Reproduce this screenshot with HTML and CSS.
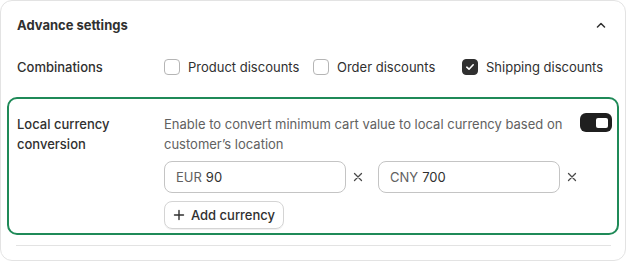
FILE: index.html
```html
<!DOCTYPE html>
<html lang="en">
<head>
    <meta charset="UTF-8">
    <meta name="viewport" content="width=device-width, initial-scale=1.0">
    <title>Advance settings</title>
    <link rel="stylesheet" href="styles.css">
</head>
<body>
    <div class="card">
        <!-- Header -->
        <div class="card-header">
            <h2 class="card-title">Advance settings</h2>
            <button class="collapse-btn" aria-label="Collapse">
                <svg width="10" height="6" viewBox="0 0 10 6"><path d="M1.5 5 L5 1.5 L8.5 5" fill="none" stroke="#303030" stroke-width="1.5" stroke-linecap="round" stroke-linejoin="round"/></svg>
            </button>
        </div>

        <!-- Combinations -->
        <div class="setting-row combinations">
            <div class="setting-label">Combinations</div>
            <div class="checkbox-grid">
                <label class="checkbox"><span class="box"></span>Product discounts</label>
                <label class="checkbox"><span class="box"></span>Order discounts</label>
                <label class="checkbox"><span class="box checked">
                    <svg width="10" height="8" viewBox="0 0 10 8"><path d="M1.8 4.2 L4 6.2 L8.2 1.8" fill="none" stroke="#fff" stroke-width="1.6" stroke-linecap="round" stroke-linejoin="round"/></svg>
                </span>Shipping discounts</label>
            </div>
        </div>

        <!-- Local currency -->
        <div class="highlight">
            <div class="setting-label multiline">Local currency<br>conversion</div>
            <div class="setting-body">
                <div class="desc-row">
                    <p class="desc">Enable to convert minimum cart value to local currency based on customer’s location</p>
                    <span class="toggle"><span class="knob"></span></span>
                </div>
                <div class="currency-row">
                    <div class="currency">
                        <div class="input"><span class="prefix">EUR</span> 90</div>
                        <button class="remove" aria-label="Remove">
                            <svg width="10" height="10" viewBox="0 0 10 10"><path d="M1.5 1.5 L8.5 8.5 M8.5 1.5 L1.5 8.5" fill="none" stroke="#4a4a4a" stroke-width="1.3" stroke-linecap="round"/></svg>
                        </button>
                    </div>
                    <div class="currency">
                        <div class="input"><span class="prefix">CNY</span> 700</div>
                        <button class="remove" aria-label="Remove">
                            <svg width="10" height="10" viewBox="0 0 10 10"><path d="M1.5 1.5 L8.5 8.5 M8.5 1.5 L1.5 8.5" fill="none" stroke="#4a4a4a" stroke-width="1.3" stroke-linecap="round"/></svg>
                        </button>
                    </div>
                </div>
                <button class="btn-add">
                    <svg width="12" height="12" viewBox="0 0 12 12"><path d="M6 1.5 V10.5 M1.5 6 H10.5" fill="none" stroke="#303030" stroke-width="1.4" stroke-linecap="round"/></svg>
                    Add currency
                </button>
            </div>
        </div>

        <div class="divider"></div>
    </div>
</body>
</html>
```

FILE: styles.css
```css
* {
    margin: 0;
    padding: 0;
    box-sizing: border-box;
}

body {
    font-family: Inter, 'Noto Sans', sans-serif;
    font-size: 13px;
    line-height: 20px;
    color: #303030;
    background: #fff;
}

button {
    font-family: inherit;
    background: none;
    border: none;
    color: inherit;
}

.card {
    width: 626px;
    border: 1px solid #e3e3e3;
    border-radius: 12px;
    padding: 0 14px 14px 16px;
    background: #fff;
}

/* Header */
.card-header {
    height: 47px;
    display: flex;
    align-items: center;
    justify-content: space-between;
}

.card-title {
    font-size: 13px;
    font-weight: 650;
}

.collapse-btn {
    width: 20px;
    height: 20px;
    display: flex;
    align-items: center;
    justify-content: center;
}

/* Rows */
.setting-row {
    display: flex;
    align-items: center;
}

.combinations {
    height: 38px;
}

.setting-label {
    width: 147px;
    flex-shrink: 0;
    font-weight: 550;
}

.checkbox-grid {
    flex: 1;
    display: grid;
    grid-template-columns: repeat(3, 1fr);
}

.checkbox {
    display: flex;
    align-items: center;
    gap: 8px;
    color: #303030;
}

.box {
    width: 16px;
    height: 16px;
    border: 1px solid #b5b5b5;
    border-radius: 4px;
    display: flex;
    align-items: center;
    justify-content: center;
}

.box.checked {
    background: #303030;
    border-color: #303030;
}

/* Highlighted block */
.highlight {
    display: flex;
    margin: 11px -8px 0 -10px;
    border: 2px solid #1f8a58;
    border-radius: 10px;
    padding: 15px 5px 4px 8px;
}

.setting-body {
    flex: 1;
}

.desc-row {
    display: flex;
    justify-content: space-between;
    align-items: flex-start;
}

.desc {
    max-width: 410px;
    color: #616161;
}

.toggle {
    width: 32px;
    height: 19px;
    margin-top: -1px;
    background: #1f1f1f;
    border-radius: 6px;
    display: flex;
    align-items: center;
    justify-content: flex-end;
    padding-right: 4px;
}

.knob {
    width: 12px;
    height: 10px;
    background: #fff;
    border-radius: 2px;
}

.currency-row {
    display: flex;
    gap: 8px;
    margin-top: 7px;
}

.currency {
    display: flex;
    align-items: center;
}

.input {
    width: 182px;
    height: 32px;
    border: 1px solid #c4c4c4;
    border-radius: 8px;
    padding: 0 11px;
    display: flex;
    align-items: center;
    gap: 4px;
    font-size: 13px;
    color: #303030;
}

.prefix {
    color: #616161;
}

.remove {
    width: 24px;
    height: 24px;
    display: flex;
    align-items: center;
    justify-content: center;
}

.btn-add {
    margin-top: 8px;
    height: 28px;
    width: 120px;
    border: 1px solid #d4d4d4;
    border-radius: 8px;
    box-shadow: 0 1px 0 rgba(0, 0, 0, 0.06);
    display: flex;
    align-items: center;
    justify-content: center;
    gap: 6px;
    font-size: 13px;
    font-weight: 550;
    color: #303030;
}

.divider {
    height: 1px;
    background: #e3e3e3;
    margin: 10px 0 0 -1px;
}
```
